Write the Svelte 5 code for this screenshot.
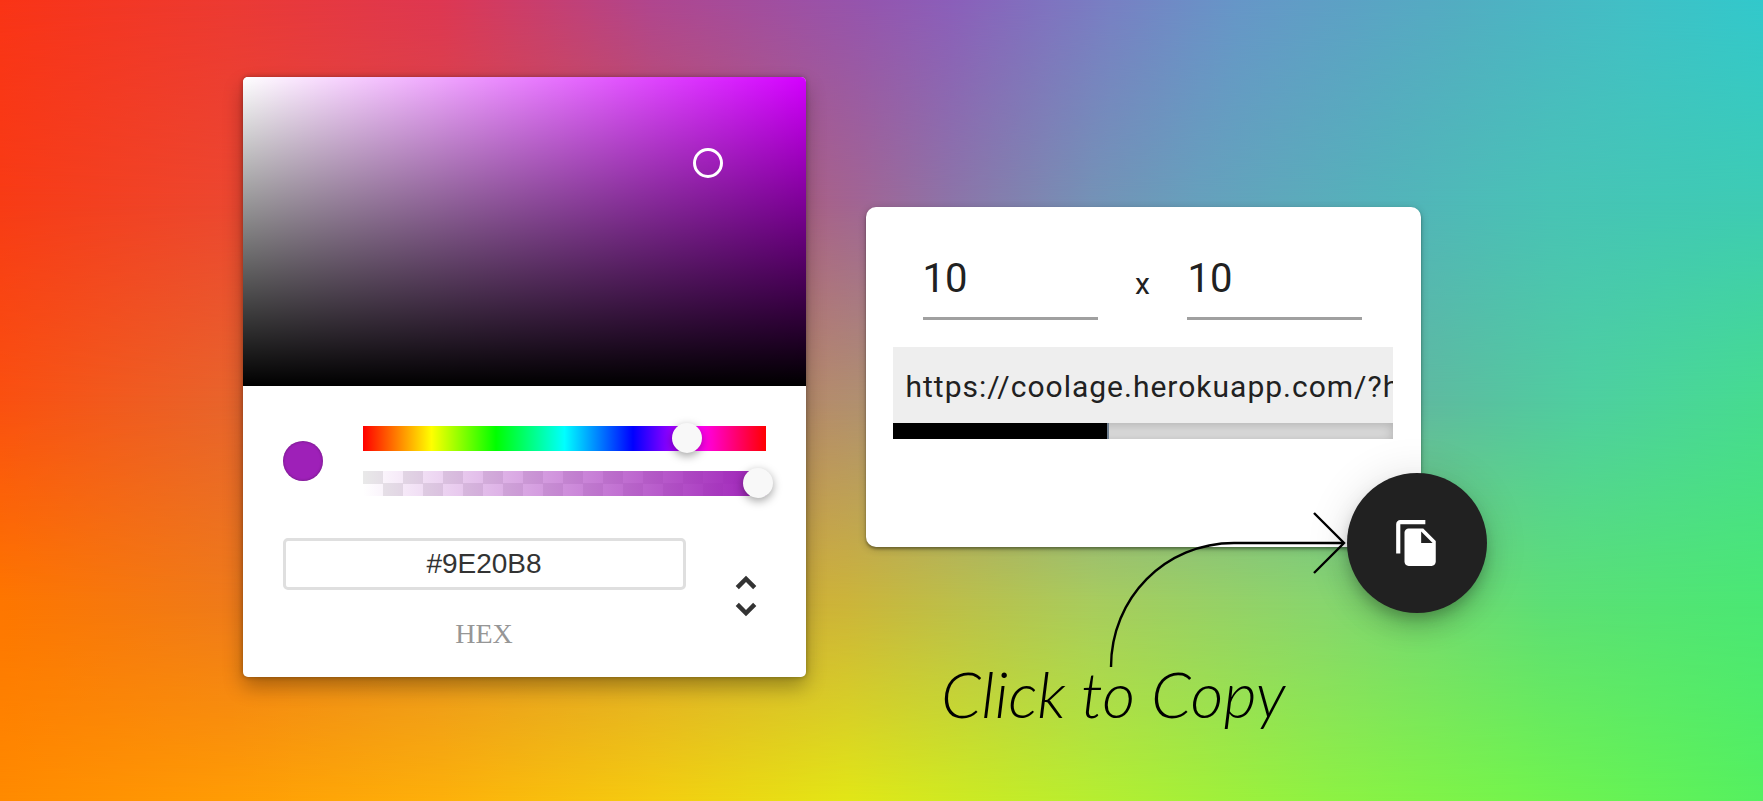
<script>
  const top = ['#fa3416 0%', '#ec3a33 13%', '#de3752 25%', '#b0468f 37%', '#9555ae 49%', '#8b5fba 54%', '#7880c4 63%', '#6796c8 70%', '#52aec2 83%', '#42bfc6 92%', '#32c9cc 100%'];
  const rows = [
    { from: 0, to: 25, stops: ['#f83b15 0%', '#ec4730 13%', '#c85058 35%', '#a06595 49%', '#8c74a8 54%', '#7492b6 62%', '#66a0bc 68%', '#54b2ba 78%', '#48c3b6 88%', '#3dccb4 100%'] },
    { from: 25, to: 50, stops: ['#fa5010 0%', '#e8642c 13%', '#c08060 40%', '#b09070 49%', '#809c98 62%', '#60b8a0 80%', '#4ecfa0 90%', '#46dc90 100%'] },
    { from: 50, to: 75, stops: ['#fe7600 0%', '#ef7a1a 13%', '#ccb43a 48%', '#a8cc5e 62%', '#88d56e 75%', '#5cdf76 88%', '#4ae874 100%'] },
    { from: 75, to: 100, stops: ['#ff8a00 0%', '#ff9c04 13%', '#fdb00a 25%', '#f4cc10 37%', '#e2e616 48%', '#b6ee30 62%', '#8ef242 75%', '#74f44c 86%', '#54f060 100%'] }
  ];
  const ramp = (stops) => `linear-gradient(to right, ${stops.join(', ')})`;

  let hue = $state(294);
  let alpha = $state(100);
  let hex = $state('#9E20B8');
  let columns = $state('10');
  let lines = $state('10');
  let url = $state('https://coolage.herokuapp.com/?h');

  function copy() {
    navigator.clipboard?.writeText(url);
  }
</script>

<main>
  <div class="mesh" aria-hidden="true">
    <div class="band" style:background={ramp(top)}></div>
    {#each rows as row}
      <div class="band" style:background={ramp(row.stops)} style:mask-image={`linear-gradient(to bottom, transparent ${row.from}%, #000 ${row.to}%)`}></div>
    {/each}
  </div>

  <section class="picker">
    <div class="saturation"><span class="pointer"></span></div>
    <div class="body">
      <div class="controls">
        <span class="swatch"></span>
        <div class="sliders">
          <div class="track hue"><input type="range" aria-label="Hue" min="0" max="360" bind:value={hue} /></div>
          <div class="track alpha"><input type="range" aria-label="Alpha" min="0" max="100" bind:value={alpha} /></div>
        </div>
      </div>
      <div class="fields">
        <div class="field">
          <input id="hex" type="text" bind:value={hex} />
          <label for="hex">HEX</label>
        </div>
        <button class="toggle" type="button" aria-label="Change format">
          <svg viewBox="0 0 24 24" width="54" height="54" fill="#333"><path d="M12 5.83 15.17 9l1.41-1.41L12 3 7.41 7.59 8.83 9 12 5.83Z" /><path d="M12 18.17 8.83 15l-1.41 1.41L12 21l4.59-4.59L15.17 15 12 18.17Z" /></svg>
        </button>
      </div>
    </div>
  </section>

  <section class="card">
    <div class="size">
      <input type="text" aria-label="Width" bind:value={columns} />
      <span>x</span>
      <input type="text" aria-label="Height" bind:value={lines} />
    </div>
    <input class="url" type="text" aria-label="Link" readonly value={url} />
    <progress aria-label="Length" max="500" value="216"></progress>

    <button class="copy" type="button" aria-label="Copy" onclick={copy}>
      <svg viewBox="0 0 24 24" width="50" height="50" fill="#fff"><path d="M16 1H4c-1.1 0-2 .9-2 2v14h2V3h12V1zm-1 4l6 6v10c0 1.1-.9 2-2 2H7.99C6.89 23 6 22.1 6 21V7c0-1.1.89-2 1.99-2h7zm-1 7h5.5L14 6.5V12z" /></svg>
    </button>
    <div class="hint">
      <svg viewBox="0 0 240 160" width="240" height="160" fill="none" stroke="#000" stroke-width="2.4"><path d="M5 157C5 88 59 33 128 33H238" /><path d="M208 3l30 30-30 30" /></svg>
      <p>Click to Copy</p>
    </div>
  </section>
</main>

<style>
  :global(body) { margin: 0; }
  main {
    position: relative;
    isolation: isolate;
    box-sizing: border-box;
    min-height: 100vh;
    padding: 48px 100px 96px 0;
    display: flex;
    align-items: center;
    justify-content: center;
    gap: 60px;
    overflow: hidden;
    font-family: Roboto, sans-serif;
    color: #212121;
  }
  .mesh, .band { position: absolute; inset: 0; }
  .mesh { z-index: -1; }
  input { box-sizing: border-box; min-width: 0; outline: none; }
  button { border: 0; padding: 0; cursor: pointer; }
  svg { display: block; }

  .picker {
    flex: 0 1 563px;
    border-radius: 5px;
    background: #fff;
    box-shadow: 0 0 5px rgba(0, 0, 0, .3), 0 10px 20px rgba(0, 0, 0, .3);
  }
  .saturation {
    position: relative;
    height: 309px;
    border-radius: 5px 5px 0 0;
    background: linear-gradient(to top, #000, transparent), linear-gradient(to right, #fff, transparent), #d400ff;
  }
  .pointer {
    position: absolute;
    left: 80%;
    top: 23%;
    box-sizing: border-box;
    width: 30px;
    height: 30px;
    border: 3px solid #fff;
    border-radius: 50%;
  }
  .body { padding: 40px 40px 27px; }
  .controls { display: flex; align-items: center; gap: 40px; }
  .swatch {
    width: 40px;
    height: 40px;
    border-radius: 50%;
    background: #9e20b8;
    box-shadow: inset 0 0 3px rgba(0, 0, 0, .35);
  }
  .sliders { flex: 1; display: grid; gap: 20px; }
  .track { height: 25px; display: flex; align-items: center; }
  .hue { background: linear-gradient(to right, #f00 0%, #ff0 17%, #0f0 33%, #0ff 50%, #00f 67%, #f0f 83%, #f00 100%); }
  .alpha {
    background:
      linear-gradient(to right, transparent, #9e20b8),
      conic-gradient(#fff 25%, #e9e9e9 0 50%, #fff 0 75%, #e9e9e9 0) 0 0 / 40px 25px;
  }
  .track input {
    appearance: none;
    flex: 1;
    height: 30px;
    margin: 0 -7px;
    background: none;
  }
  .track input::-webkit-slider-thumb {
    appearance: none;
    width: 30px;
    height: 30px;
    border-radius: 50%;
    background: #f8f8f8;
    box-shadow: 0 3px 10px rgba(0, 0, 0, .37);
  }
  .fields { display: flex; align-items: flex-start; padding-top: 42px; }
  .field { flex: 1; display: grid; gap: 28px; }
  .field input {
    width: 100%;
    height: 52px;
    padding: 1px 0 0;
    border: 3px solid #dfdfdf;
    border-radius: 5px;
    background: #fff;
    color: #333;
    font: 28px "Liberation Sans", sans-serif;
    text-align: center;
  }
  .field label {
    color: #969696;
    font: 28px/32px "Liberation Serif", serif;
    text-align: center;
  }
  .toggle { width: 80px; padding: 31px 0 0 33px; background: none; }

  .card {
    position: relative;
    box-sizing: border-box;
    flex: 0 1 555px;
    height: 340px;
    padding: 40px 28px 0 27px;
    border-radius: 10px;
    background: #fff;
    box-shadow: 0 2px 3px rgba(0, 0, 0, .35), 0 2px 8px rgba(0, 0, 0, .2);
  }
  .size { display: flex; justify-content: space-between; padding: 0 30px; }
  .size span { padding-top: 19px; font-size: 30px; line-height: 36px; }
  .size input {
    flex: 0 1 175px;
    height: 73px;
    padding: 0 0 7px;
    border: 0;
    border-bottom: 3px solid #a0a0a0;
    background: none;
    color: inherit;
    font: 40px Roboto, sans-serif;
  }
  .url {
    display: block;
    width: 100%;
    height: 76px;
    margin-top: 27px;
    padding: 4px 0 0 13px;
    border: 0;
    background: #eee;
    color: inherit;
    font: 30px Roboto, sans-serif;
    letter-spacing: 1px;
  }
  progress {
    appearance: none;
    display: block;
    width: 100%;
    height: 16px;
    border: 0;
  }
  progress::-webkit-progress-bar {
    background: #dcdcdc;
    box-shadow: inset 0 2px 12px rgba(0, 0, 0, .2);
  }
  progress::-webkit-progress-value {
    box-sizing: border-box;
    border-right: 2px solid #708090;
    background: #000;
  }
  .copy {
    position: absolute;
    right: -66px;
    bottom: -66px;
    width: 140px;
    height: 140px;
    display: grid;
    place-items: center;
    border-radius: 50%;
    background: #212121;
    box-shadow: 0 8px 13px -3px rgba(0, 0, 0, .2), 0 15px 25px rgba(0, 0, 0, .14), 0 3px 45px rgba(0, 0, 0, .12);
  }
  .hint {
    position: absolute;
    right: 75px;
    top: 303px;
    display: grid;
    justify-items: end;
  }
  .hint p {
    margin: -12px 60px 0 0;
    color: #000;
    font: italic 300 64px/72px Lato, cursive;
    white-space: nowrap;
  }
</style>
